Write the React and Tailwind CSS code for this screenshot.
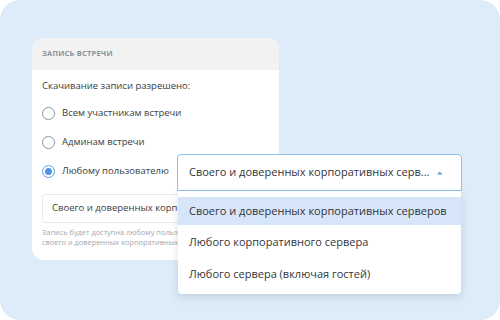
import React from 'react';

const Radio = ({ checked, label }) => (
  <div className="flex items-center h-[29px]">
    {checked ? (
      <span className="w-[13px] h-[13px] rounded-full border-[1.5px] border-[#5b9ee9] flex items-center justify-center">
        <span className="w-[7px] h-[7px] rounded-full bg-[#4f95e6]" />
      </span>
    ) : (
      <span className="w-[13px] h-[13px] rounded-full border-[1.3px] border-[#8e939b]" />
    )}
    <span className="ml-[7px] text-[9.5px] text-[#3a3d42]">{label}</span>
  </div>
);

const options = [
  'Своего и доверенных корпоративных серверов',
  'Любого корпоративного сервера',
  'Любого сервера (включая гостей)',
];

export default function App() {
  return (
    <div className="w-[500px] h-[320px] bg-white" style={{ fontFamily: '"Open Sans", "Noto Sans", sans-serif' }}>
      <div className="relative w-full h-full rounded-[20px] bg-[#deebf8] pt-[38px] pl-[32px] overflow-hidden">
        <div className="w-[247px] h-[222px] bg-white rounded-[12px] overflow-hidden">
          <div className="h-[32px] bg-[#f2f2f2] flex items-center pl-[10px] text-[7.5px] font-bold tracking-[0.2px] text-[#8b9099]">
            ЗАПИСЬ ВСТРЕЧИ
          </div>
          <div className="pl-[10px] pr-[10px]">
            <div className="pt-[6px] h-[27px] flex items-center text-[9.5px] text-[#3a3d42]">Скачивание записи разрешено:</div>
            <div className="mt-[2px] flex flex-col">
              <Radio label="Всем участникам встречи" />
              <Radio label="Админам встречи" />
              <Radio checked label="Любому пользователю" />
            </div>
            <div className="mt-[8px] h-[29px] border border-[#e6e8eb] rounded-[3px] flex items-center pl-[9px] text-[9.5px] text-[#3a3d42] whitespace-nowrap overflow-hidden">
              Своего и доверенных корпоративных серверов
            </div>
            <div className="mt-[4px] text-[7.4px] leading-[10px] text-[#a3a8af]">
              Запись будет доступна любому пользователю<br />
              своего и доверенных корпоративных серверов
            </div>
          </div>
        </div>

        <div className="absolute left-[177px] top-[154px] w-[285px]">
          <div className="h-[37px] bg-white border border-[#90bef0] rounded-t-[4px] flex items-center pl-[11px] pr-[18px]">
            <span className="flex-1 text-[11px] text-[#333539] whitespace-nowrap">Своего и доверенных корпоративных серв...</span>
            <svg width="7" height="4" viewBox="0 0 7 4" className="ml-[8px]">
              <path d="M0 4 L3.5 0 L7 4 Z" fill="#5b9ee9" />
            </svg>
          </div>
          <div className="ml-[1px] w-[283px] h-[103px] bg-white rounded-b-[4px] shadow-[0_3px_8px_rgba(60,90,130,0.18)] pt-[6px] flex flex-col gap-[3.5px]">
            {options.map((o, i) => (
              <div key={o} className={`h-[28px] flex items-center pl-[11px] text-[11px] text-[#333539] ${i === 0 ? 'bg-[#d6e6f8]' : ''}`}>
                {o}
              </div>
            ))}
          </div>
        </div>
      </div>
    </div>
  );
}
